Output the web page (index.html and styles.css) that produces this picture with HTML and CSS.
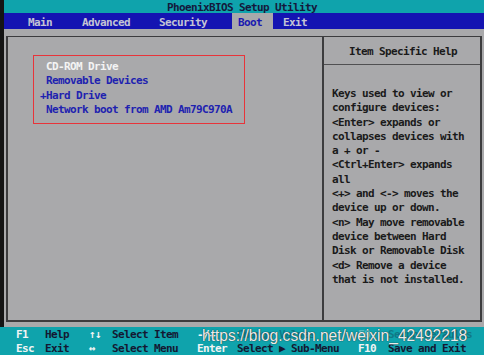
FILE: index.html
```html
<!DOCTYPE html>
<html>
<head>
<meta charset="utf-8">
<link rel="stylesheet" href="styles.css">
</head>
<body>
<div class="screen">
  <div class="titlebar">PhoenixBIOS Setup Utility</div>
  <div class="menubar">
    <span class="tab">Main</span>
    <span class="tab">Advanced</span>
    <span class="tab">Security</span>
    <span class="tab tab-active">Boot</span>
    <span class="tab tab-exit">Exit</span>
  </div>
  <div class="main">
    <div class="frame">
      <div class="left-panel">
        <div class="boot-list">
          <div class="boot-item boot-selected"> CD-ROM Drive</div>
          <div class="boot-item"> Removable Devices</div>
          <div class="boot-item">+Hard Drive</div>
          <div class="boot-item"> Network boot from AMD Am79C970A</div>
        </div>
      </div>
      <div class="right-panel">
        <div class="help-title">Item Specific Help</div>
        <div class="help-text">
          <div>Keys used to view or</div>
          <div>configure devices:</div>
          <div>&lt;Enter&gt; expands or</div>
          <div>collapses devices with</div>
          <div>a + or -</div>
          <div>&lt;Ctrl+Enter&gt; expands</div>
          <div>all</div>
          <div>&lt;+&gt; and &lt;-&gt; moves the</div>
          <div>device up or down.</div>
          <div>&lt;n&gt; May move removable</div>
          <div>device between Hard</div>
          <div>Disk or Removable Disk</div>
          <div>&lt;d&gt; Remove a device</div>
          <div>that is not installed.</div>
        </div>
      </div>
    </div>
  </div>
  <div class="footer">
    <div class="footer-grid">
      <span class="key">F1</span><span class="desc">Help</span><span class="key">↑↓</span><span class="desc">Select Item</span><span class="key">-/+</span><span class="desc hidden-under">Change Values</span><span class="key hidden-under">F9</span><span class="desc hidden-under">Setup Defaults</span>
      <span class="key">Esc</span><span class="desc">Exit</span><span class="key">↔</span><span class="desc">Select Menu</span><span class="key">Enter</span><span class="desc">Select ▶ Sub-Menu</span><span class="key">F10</span><span class="desc">Save and Exit</span>
    </div>
    <div class="watermark">https://blog.csdn.net/weixin_42492218</div>
  </div>
</div>
</body>
</html>
```
FILE: styles.css
```css
* { box-sizing: border-box; }
html, body {
  margin: 0;
  padding: 0;
  width: 484px;
  height: 355px;
  overflow: hidden;
  background: #a9a9ab;
}
.screen {
  width: 484px;
  height: 355px;
  display: flex;
  flex-direction: column;
  font-family: "DejaVu Sans Mono", monospace;
  font-weight: bold;
  font-size: 11px;
  letter-spacing: -0.62px;
}
.titlebar {
  height: 13px;
  flex: none;
  line-height: 15px;
  background: #0fa3ac;
  color: #14183c;
  text-align: center;
  padding-right: 4px;
  border-left: 4px solid #141414;
  white-space: pre;
}
.menubar {
  height: 16px;
  flex: none;
  background: #1414b2;
  display: grid;
  grid-template-columns: 54px 77px 79px 41px auto;
  padding-left: 18px;
  border-left: 4px solid #141414;
}
.tab {
  color: #c4c4d4;
  padding-left: 6px;
  line-height: 19px;
  white-space: pre;
}
.tab-active {
  background: #a9a9ab;
  color: #1a1ab0;
}
.tab-exit { padding-left: 10px; }
.main {
  flex: 1;
  min-height: 0;
  background: #a9a9ab;
  border-left: 4px solid #141414;
  padding: 7px 2px 5px 2px;
  display: flex;
}
.frame {
  flex: 1;
  border: 2px solid #3c3c3e;
  border-top-width: 1px;
  display: grid;
  grid-template-columns: 316px 1fr;
}
.left-panel {
  border-right: 2px solid #3c3c3e;
  padding: 18px 0 0 25px;
}
.boot-list {
  width: 212px;
  border: 1px solid #e8343a;
  padding: 4px 0 6px 6px;
}
.boot-item {
  line-height: 14.3px;
  color: #1e22b0;
  white-space: pre;
}
.boot-selected { color: #f4f4f4; }
.right-panel { display: flex; flex-direction: column; }
.help-title {
  height: 28px;
  line-height: 29px;
  text-align: center;
  color: #1a1a1a;
  border-bottom: 1px solid #505052;
  padding-left: 2px;
  white-space: pre;
}
.help-text {
  padding: 22px 0 0 8px;
  color: #1a1a1a;
}
.help-text div { line-height: 14.3px; white-space: pre; }
.footer {
  height: 28px;
  flex: none;
  background: #0fa3ac;
  position: relative;
  padding-top: 2px;
}
.footer-grid {
  display: grid;
  grid-template-columns: 29px 44px 23px 85px 40px 121px 30px auto;
  row-gap: 2px;
  padding-left: 16px;
  line-height: 12px;
}
.footer-grid span { white-space: pre; }
.key { color: #f2f4f4; }
.desc { color: #141832; }
.hidden-under { opacity: 0.3; }
.watermark {
  position: absolute;
  left: 202px;
  top: 0;
  font-family: "Liberation Sans", Arial, sans-serif;
  font-weight: normal;
  font-size: 15.6px;
  letter-spacing: 0;
  white-space: pre;
  color: rgba(255,255,255,0.92);
  text-shadow: 0 0 1px rgba(40,40,40,0.9), 0 0 1px rgba(40,40,40,0.6);
}
```
